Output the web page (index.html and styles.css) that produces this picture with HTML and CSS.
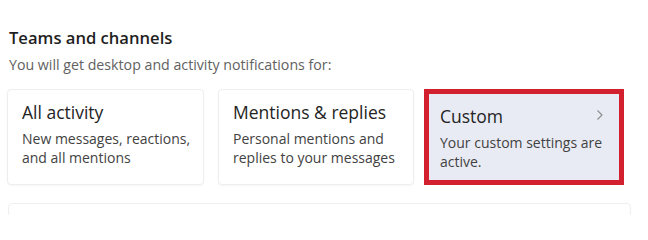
FILE: index.html
```html
<!DOCTYPE html>
<html>
<head>
<meta charset="utf-8">
<link rel="stylesheet" href="styles.css">
</head>
<body>
<div class="page">
  <h2 class="section-title">Teams and channels</h2>
  <p class="section-sub">You will get desktop and activity notifications for:</p>
  <div class="options">
    <div class="card card-a">
      <div class="card-title">All activity</div>
      <div class="card-desc">New messages, reactions, and all mentions</div>
    </div>
    <div class="card card-b">
      <div class="card-title">Mentions &amp; replies</div>
      <div class="card-desc">Personal mentions and replies to your messages</div>
    </div>
    <div class="card card-custom">
      <div class="card-head">
        <div class="card-title">Custom</div>
        <svg class="chevron" width="8" height="12" viewBox="0 0 8 12"><path d="M1.5 1.5 L6 6 L1.5 10.5" fill="none" stroke="#8a8a8a" stroke-width="1.1"/></svg>
      </div>
      <div class="card-desc">Your custom settings are active.</div>
    </div>
  </div>
  <div class="next-card"></div>
</div>
</body>
</html>
```
FILE: styles.css
```css
html, body {
  margin: 0;
  padding: 0;
  background: #ffffff;
}
body {
  font-family: "Open Sans", "Noto Sans", sans-serif;
  color: #242424;
  height: 215px;
  overflow: hidden;
}
.page {
  padding: 25px 0 0 9px;
  width: 640px;
  box-sizing: border-box;
}
.section-title {
  margin: 0;
  font-size: 16.6px;
  font-weight: 600;
  line-height: 25px;
  color: #1f1f1f;
}
.section-sub {
  margin: 5px 0 0 0;
  font-size: 14.2px;
  line-height: 20px;
  color: #616161;
}
.options {
  display: flex;
  margin-top: 14px;
  margin-left: -2px;
  align-items: flex-start;
}
.card {
  box-sizing: border-box;
  height: 96px;
  background: #ffffff;
  border: 1px solid #eeeeee;
  border-radius: 4px;
  box-shadow: 0 1px 2px rgba(0,0,0,0.04);
  padding: 9px 8px 9px 14px;
}
.card-a { width: 197px; }
.card-b { width: 196px; margin-left: 14px; }
.card-custom {
  width: 200px;
  margin-left: 10px;
  background: #e9ebf4;
  border: 5px solid #d3202f;
  border-radius: 0;
  box-shadow: none;
  padding: 9px 11px;
}
.card-head {
  display: flex;
  justify-content: space-between;
  align-items: center;
}
.chevron {
  margin-right: 4px;
  margin-top: -3px;
}
.card-title {
  font-size: 17.5px;
  line-height: 26px;
  color: #242424;
}
.card-desc {
  margin-top: 4px;
  font-size: 14px;
  line-height: 19px;
  color: #424242;
}
.next-card {
  margin-top: 18px;
  margin-left: -1px;
  width: 621px;
  height: 12px;
  border: 1px solid #efefef;
  border-radius: 4px;
}
```
